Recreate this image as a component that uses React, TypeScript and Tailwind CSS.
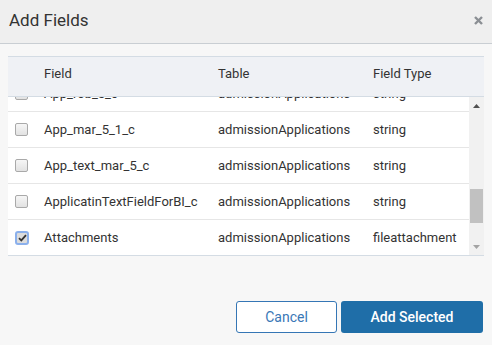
import React from "react";

const rows = [
  { field: "App_rob_5_c", table: "admissionApplications", type: "string", checked: false },
  { field: "App_mar_5_1_c", table: "admissionApplications", type: "string", checked: false },
  { field: "App_text_mar_5_c", table: "admissionApplications", type: "string", checked: false },
  { field: "ApplicatinTextFieldForBI_c", table: "admissionApplications", type: "string", checked: false },
  { field: "Attachments", table: "admissionApplications", type: "fileattachment", checked: true },
];

function Checkbox({ checked }: { checked: boolean }) {
  if (checked) {
    return (
      <span className="flex h-[14px] w-[14px] items-center justify-center rounded-[3px] border-2 border-[#8bb0ec] bg-[#dcdcdc]">
        <svg width="9" height="8" viewBox="0 0 9 8">
          <path d="M1 4.2 L3.3 6.4 L8 1.2" fill="none" stroke="#333" strokeWidth="1.8" />
        </svg>
      </span>
    );
  }
  return (
    <span className="block h-[13px] w-[13px] rounded-[2px] border border-[#a9a9a9] bg-gradient-to-b from-[#f6f6f6] to-[#e2e2e2]" />
  );
}

export default function App() {
  return (
    <div
      className="flex h-[345px] w-[492px] flex-col bg-[#f7f7f7] text-[#333]"
      style={{ fontFamily: "Roboto, 'Liberation Sans', sans-serif" }}
    >
      <div className="relative flex h-[44px] shrink-0 items-center border-b border-[#c9ced3] bg-[#efefef] pl-[9px]">
        <span className="text-[17px] leading-none text-[#333] pb-[2px]">Add Fields</span>
        <svg className="absolute left-[474px] top-[16px]" width="9" height="9" viewBox="0 0 9 9">
          <path d="M1 1 L8 8 M8 1 L1 8" stroke="#8b8f94" strokeWidth="2.4" strokeLinecap="butt" />
        </svg>
      </div>

      <div className="ml-[8px] mt-[12px] w-[476px]">
        <div className="flex h-[41px] border-y border-[#d4dce4] bg-[#eff1f5] pt-[7px] text-[13px] leading-[20px] text-[#333]">
          <div className="w-[36px]" />
          <div className="w-[174px]">Field</div>
          <div className="w-[155px]">Table</div>
          <div>Field Type</div>
        </div>
        <div className="flex h-[159px] border-b border-[#d4dce4]">
          <div className="w-[461px] overflow-hidden bg-white">
            <div className="mt-[-21px]">
              {rows.map((r) => (
                <div
                  key={r.field}
                  className="flex h-[36px] items-center border-b border-[#e6e6e6] text-[13px] leading-[20px]"
                >
                  <div className="flex w-[36px] pl-[7px]">
                    <Checkbox checked={r.checked} />
                  </div>
                  <div className="w-[174px] whitespace-nowrap">{r.field}</div>
                  <div className="w-[155px] whitespace-nowrap">{r.table}</div>
                  <div className="whitespace-nowrap">{r.type}</div>
                </div>
              ))}
            </div>
          </div>
          <div className="flex w-[15px] flex-col bg-[#f1f1f1]">
            <div className="flex h-[17px] items-center justify-center">
              <svg width="7" height="4" viewBox="0 0 7 4">
                <path d="M0 4 L3.5 0 L7 4 Z" fill="#505050" />
              </svg>
            </div>
            <div className="flex-1 pt-[75px] pb-[15px] px-[1px]">
              <div className="h-full bg-[#c1c1c1]" />
            </div>
            <div className="flex h-[17px] items-center justify-center">
              <svg width="7" height="4" viewBox="0 0 7 4">
                <path d="M0 0 L3.5 4 L7 0 Z" fill="#a3a3a3" />
              </svg>
            </div>
          </div>
        </div>
      </div>

      <div className="mt-[45px] flex justify-end gap-[4px] pr-[9px]">
        <button className="h-[32px] w-[101px] rounded-[3px] border border-[#3576b5] bg-white text-[14px] text-[#3a77b6]">
          Cancel
        </button>
        <button className="h-[32px] w-[142px] rounded-[3px] bg-[#1f6ea8] text-[14px] font-medium text-white">
          Add Selected
        </button>
      </div>
    </div>
  );
}
